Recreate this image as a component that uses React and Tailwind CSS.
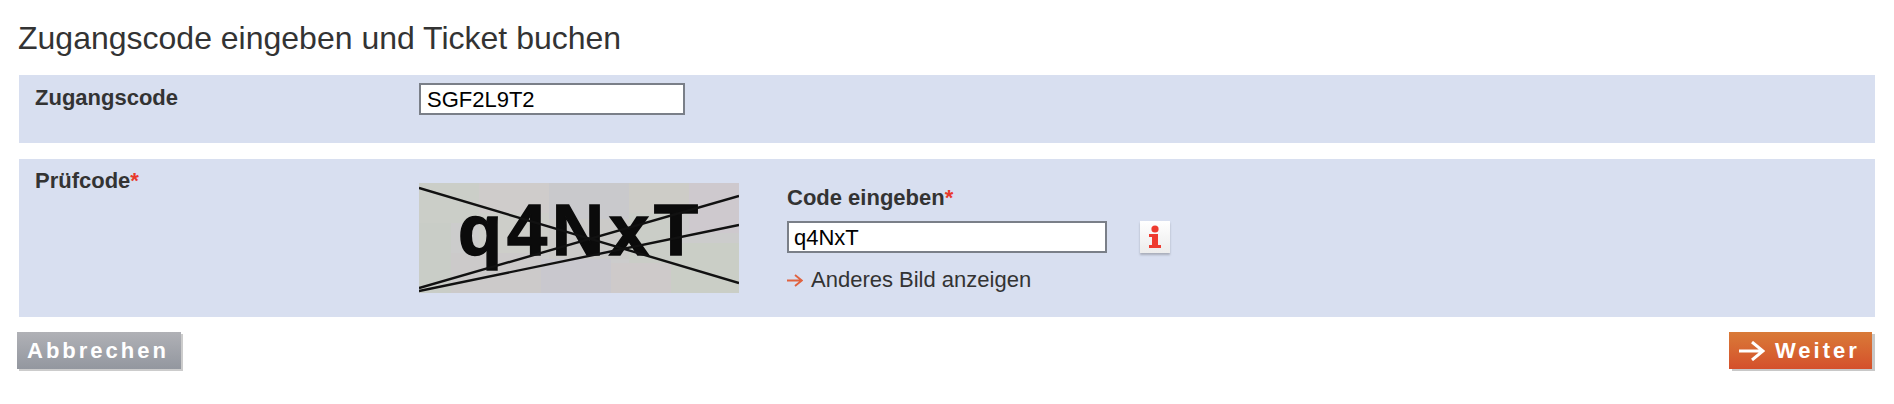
const NOISE = [
  [0, 0, 60, 40, '#cbcec8'], [60, 0, 70, 30, '#cfcccb'], [130, 0, 80, 36, '#c9c9cc'], [210, 0, 60, 30, '#cdccc7'], [270, 0, 50, 50, '#cec9ce'],
  [0, 40, 32, 70, '#c9cdc7'], [32, 70, 90, 40, '#cccaca'], [122, 76, 70, 34, '#c9c8ce'], [192, 80, 60, 30, '#cecaca'], [252, 60, 68, 50, '#cacec6'],
  [60, 30, 70, 40, '#cdcec9'], [130, 36, 80, 40, '#cbcac8'], [210, 30, 42, 50, '#cacdc7'],
];

function Captcha() {
  return (
    <svg width="320" height="110" viewBox="0 0 320 110" className="block shrink-0">
      <rect width="320" height="110" fill="#cccccc" />
      {NOISE.map(([x, y, w, h, c], i) => (
        <rect key={i} x={x} y={y} width={w} height={h} fill={c} />
      ))}
      <text x="39" y="72" fontFamily="Liberation Sans" fontWeight="700" fontSize="72" letterSpacing="5" fill="#0b0b0b" stroke="#0b0b0b" strokeWidth="1.5">q4NxT</text>
      <g stroke="#111111" strokeWidth="2.4" fill="none">
        <path d="M0 5 L320 100" />
        <path d="M0 105 L320 13" />
        <path d="M0 108 L320 42" />
      </g>
    </svg>
  );
}

function Arrow({ className }) {
  return (
    <svg viewBox="0 0 26 20" fill="none" stroke="currentColor" strokeWidth="3" className={className}>
      <path d="M0 10 H24 M13 1 L24 10 L13 19" />
    </svg>
  );
}

function InfoIcon() {
  return (
    <svg viewBox="0 0 30 32" className="w-[30px] h-[32px]" fill="#ee3b30">
      <circle cx="15" cy="8" r="3.6" />
      <path d="M9 13 H18 V24 H21 V27 H9 V24 H12 V16 H9 Z" />
    </svg>
  );
}

export default function App() {
  return (
    <div className="h-[404px] w-full bg-white font-['Liberation_Sans',sans-serif] text-[#333333]">
      <div className="px-[19px] pt-[21px]">
        <h1 className="h-[34px] -ml-px text-[32px] leading-[34px] font-normal">Zugangscode eingeben und Ticket buchen</h1>

        <div className="mt-[20px] h-[68px] bg-[#d8dff0] flex pt-2 pl-[16px]">
          <div className="w-[384px] pt-px text-[22px] leading-[28px] font-bold">Zugangscode</div>
          <input
            readOnly
            value="SGF2L9T2"
            className="w-[266px] h-[32px] border-2 border-[#7a7f88] bg-white px-[6px] text-[22px] text-black outline-none"
          />
        </div>

        <div className="mt-[16px] h-[158px] bg-[#d8dff0] flex pt-[8px] pl-[16px]">
          <div className="w-[384px] text-[22px] leading-[28px] font-bold">
            Prüfcode<span className="text-[#e8392b]">*</span>
          </div>
          <div className="pt-[16px]">
            <Captcha />
          </div>
          <div className="ml-[48px] pt-[16px]">
            <div className="text-[22px] leading-[30px] font-bold">
              Code eingeben<span className="text-[#e8392b]">*</span>
            </div>
            <div className="mt-[8px] flex">
              <input
                readOnly
                value="q4NxT"
                className="w-[320px] h-[32px] border-2 border-[#7a7f88] bg-white px-[5px] text-[22px] text-black outline-none"
              />
              <div className="ml-[33px] w-[30px] h-[32px] bg-gradient-to-b from-white to-[#ececec] shadow-[0_2px_2px_#a9aebb]">
                <InfoIcon />
              </div>
            </div>
            <a className="mt-[12px] flex items-center text-[22px] leading-[30px]">
              <Arrow className="w-[16px] h-[13px] mr-[8px] text-[#e0623f]" />
              Anderes Bild anzeigen
            </a>
          </div>
        </div>

        <div className="mt-[15px] flex justify-between">
          <button className="-ml-[2px] w-[164px] h-[37px] pr-[2px] bg-gradient-to-b from-[#b0b1b6] to-[#93979f] shadow-[2px_2px_0_#cccccc] text-white font-bold text-[22px] tracking-[3px]">
            Abbrechen
          </button>
          <button className="mr-[3px] w-[143px] h-[37px] bg-gradient-to-b from-[#d97a38] to-[#d44f2b] shadow-[3px_2px_0_#c8c8c8] text-white font-bold text-[22px] tracking-[3px] flex items-center pl-[10px]">
            <Arrow className="w-[26px] h-[20px] mr-[10px]" />
            Weiter
          </button>
        </div>
      </div>
    </div>
  );
}
